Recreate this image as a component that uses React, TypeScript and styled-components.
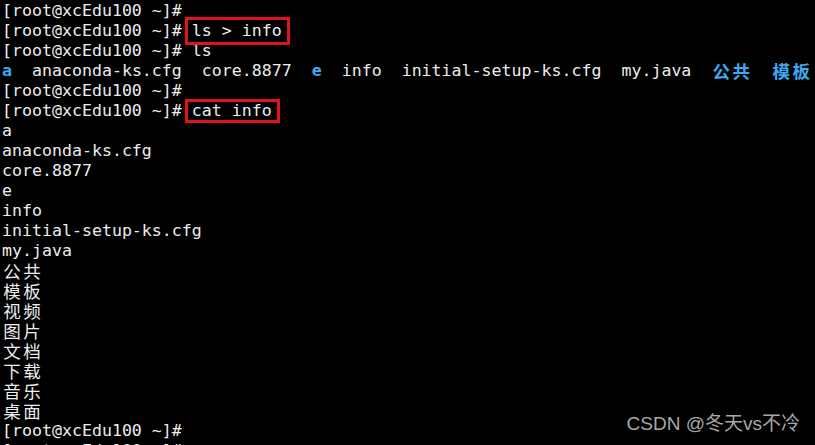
import React from "react";
import styled, { createGlobalStyle } from "styled-components";

const Global = createGlobalStyle`
  html, body { margin: 0; padding: 0; background: #000; }
  body { width: 815px; height: 445px; overflow: hidden; }
`;

const Terminal = styled.div`
  position: relative;
  width: 815px;
  height: 445px;
  overflow: hidden;
  background: #000;
  padding: 1px 0 0 2px;
  box-sizing: border-box;
  font-family: "DejaVu Sans Mono", "Liberation Mono", "Noto Sans CJK SC", monospace;
  font-size: 16.6px;
  color: #ececec;
`;

const Row = styled.div`
  height: 20px;
  line-height: 20px;
  white-space: pre;
`;

const Dir = styled.span`
  color: #3ba9f3;
  font-weight: bold;
`;

const Wide = styled.span`
  display: inline-block;
  width: 20px;
  height: 20px;
  text-align: center;
  font-family: "Noto Sans CJK SC", sans-serif;
  font-size: 17.5px;
  vertical-align: top;
  line-height: 20px;
`;

const Marked = styled.span<{ $top: number; $bottom: number }>`
  position: relative;
  display: inline-block;
  height: 20px;
  line-height: 20px;
  vertical-align: top;
  &::after {
    content: "";
    position: absolute;
    left: -7px;
    right: -8px;
    top: ${(p) => p.$top}px;
    bottom: ${(p) => p.$bottom}px;
    border: 3px solid #e3131c;
  }
`;

const Watermark = styled.div`
  position: absolute;
  right: 15px;
  bottom: 10px;
  font-family: "Liberation Sans", "Noto Sans CJK SC", sans-serif;
  font-size: 19px;
  line-height: 22px;
  color: #a8a8a8;
  white-space: nowrap;
`;

const CJK = ({ text }: { text: string }) => (
  <>
    {Array.from(text).map((c, i) => (
      <Wide key={i}>{c}</Wide>
    ))}
  </>
);

const PROMPT = "[root@xcEdu100 ~]#";

const catLines = ["a", "anaconda-ks.cfg", "core.8877", "e", "info", "initial-setup-ks.cfg", "my.java"];
const cjkLines = ["公共", "模板", "视频", "图片", "文档", "下载", "音乐", "桌面"];

export default function App() {
  return (
    <>
      <Global />
      <Terminal>
        <Row>{PROMPT}</Row>
        <Row>
          {PROMPT} <Marked $top={-4} $bottom={-4}>ls &gt; info</Marked>
        </Row>
        <Row>{PROMPT} ls</Row>
        <Row>
          <Dir>a</Dir>
          {"  anaconda-ks.cfg  core.8877  "}
          <Dir>e</Dir>
          {"  info  initial-setup-ks.cfg  my.java  "}
          <Dir>
            <CJK text="公共" />
          </Dir>
          {"  "}
          <Dir>
            <CJK text="模板" />
          </Dir>
        </Row>
        <Row>{PROMPT}</Row>
        <Row>
          {PROMPT} <Marked $top={-2} $bottom={-2}>cat info</Marked>
        </Row>
        {catLines.map((l) => (
          <Row key={l}>{l}</Row>
        ))}
        {cjkLines.map((l) => (
          <Row key={l}>
            <CJK text={l} />
          </Row>
        ))}
        <Row>{PROMPT}</Row>
        <Row>{PROMPT}</Row>
        <Watermark>CSDN @冬天vs不冷</Watermark>
      </Terminal>
    </>
  );
}
